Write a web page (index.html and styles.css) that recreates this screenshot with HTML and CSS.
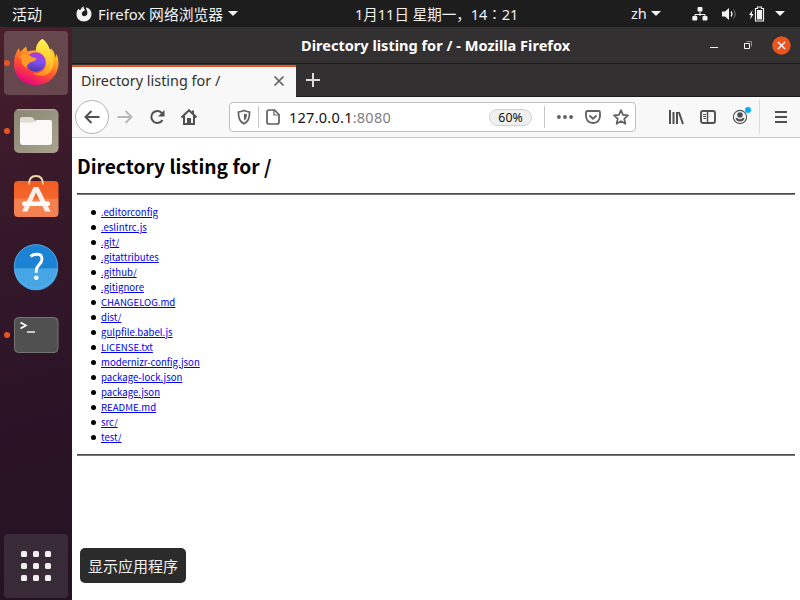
FILE: index.html
```html
<!DOCTYPE html>
<html lang="zh-CN">
<head>
<meta charset="utf-8">
<title>Directory listing for /</title>
<link rel="stylesheet" href="styles.css">
</head>
<body>
<div class="desktop">
  <header class="topbar">
    <span class="activities">活动</span>
    <div class="appmenu">
      <svg width="16" height="16" viewBox="0 0 16 16"><path fill="#f2f2f2" d="M8 .2C7.400 1.100 7.500 2 8.200 2.900L9.500 4L7.500 5L6 6.500C5.200 8.500 6.500 10.200 8.300 10.200C10.500 10.200 11.800 8.300 11.300 6C11 4.500 10.300 3.200 9.800 1.500C13.700 2 15.800 5 15.500 8.500C15.200 12.500 12 15.500 8 15.500C3.700 15.500.5 12.500.5 8.300C.5 5.900 1 4.300 2.500 2.800L3.400 4.100L4.900 3.500C5.200 2 6.300.8 8 .2Z"/></svg>
      <span class="appname">Firefox 网络浏览器</span><i class="caret"></i>
    </div>
    <span class="clock">1月11日 星期一，14∶21</span>
    <div class="status">
      <span class="lang">zh</span><i class="caret"></i>
      <svg class="net" width="16" height="14" viewBox="0 0 16 14"><path d="M8 3v6M3 10V7.500h10V10" fill="none" stroke="#f2f2f2"/><g fill="#f2f2f2"><rect x="5.500" width="5" height="4.500" rx="1"/><rect x=".3" y="9" width="5" height="4.500" rx="1"/><rect x="10.500" y="9" width="5" height="4.500" rx="1"/></g></svg>
      <svg class="vol" width="15" height="14" viewBox="0 0 15 14"><path d="M0 4.500h3L7 1v12L3 9.500H0z" fill="#f2f2f2"/><path d="M9 4.500q2 2.500 0 5" fill="none" stroke="#f2f2f2" stroke-width="1.300"/><path d="M11.500 2.500q3.500 4.500 0 9" fill="none" stroke="#777"/></svg>
      <svg class="bat" width="16" height="16" viewBox="0 0 16 16"><path d="M3.500 4L0 9h2l-.8 4.500L4.600 8H2.800z" fill="#f2f2f2"/><path d="M6.500 2.500h2v-1.500h4v1.500h2v12.500h-8z" fill="none" stroke="#f2f2f2" stroke-width="1.200"/><path d="M8 4h5v9.500H8z" fill="#f2f2f2"/></svg>
      <i class="caret"></i>
    </div>
  </header>
  <div class="main">
    <nav class="dock">
      <div class="tile active running">
        <svg width="48" height="48" viewBox="0 0 48 48">
          <defs>
            <linearGradient id="fox" x1=".8" y1="0" x2=".35" y2="1"><stop offset="0" stop-color="#fff24a"/><stop offset=".35" stop-color="#ffab20"/><stop offset=".65" stop-color="#ff542e"/><stop offset="1" stop-color="#e9007f"/></linearGradient>
            <linearGradient id="globe" x1=".6" y1="0" x2=".4" y2="1"><stop offset="0" stop-color="#b833e1"/><stop offset=".45" stop-color="#8350f5"/><stop offset="1" stop-color="#4b35a8"/></linearGradient>
            <linearGradient id="flame" x1=".4" y1="0" x2=".3" y2="1"><stop offset="0" stop-color="#fff44f"/><stop offset=".6" stop-color="#ffc42e"/><stop offset="1" stop-color="#ff8a25"/></linearGradient>
          </defs>
          <path fill="url(#fox)" d="M30.500 0C35 3 37 8 38 11L39 9.500C42 12 43 16 43.500 19L44.500 15C46.500 19 47 24 46 29C43.500 40 34 46 24 46C11 46 2 37 2 25C2 18 4 13 7 9L8 13L14 7.500L15.500 12.500C20 11 23 12 24 11C24 6 27 2 30.500 0Z"/>
          <path fill="url(#flame)" d="M30.500 0C35 4 37 8 38 12C43.500 19 43 30 36 35C31 38 25 37 21 34C29 35 34.500 31 34.500 24C34.500 19 31 14 24 12C24 6 27 2 30.500 0Z"/>
          <circle cx="23.800" cy="23" r="9.800" fill="url(#globe)"/>
          <path fill="#ff9a27" d="M7 18Q13 12 19 17.500L24.500 19.500Q24 22 19 23Q15 25 14.500 29Q9 26 9.500 20Z"/>
        </svg>
      </div>
      <div class="tile running">
        <svg width="48" height="48" viewBox="0 0 48 48"><defs><linearGradient id="cab" x1="0" y1="0" x2="1" y2="1"><stop offset="0" stop-color="#898474"/><stop offset="1" stop-color="#aaa48f"/></linearGradient></defs><rect x="2" y="2" width="44.500" height="44" rx="5" fill="url(#cab)"/><path d="M5 2.700h38" stroke="#bbb6a5"/><path d="M8 15v-3q0-2 2-2h9q1.500 0 2.500 1.500L23.500 14v3H8z" fill="#dedbd0"/><path d="M8 15.500h12q2 0 3.500-1.500l1-1H38q2 0 2 2v20q0 3-3 3H11q-3 0-3-3z" fill="#faf9f8"/></svg>
      </div>
      <div class="tile">
        <svg width="48" height="48" viewBox="0 0 48 48"><defs><linearGradient id="bag" x1="0" y1="0" x2="0" y2="1"><stop offset="0" stop-color="#f15b22"/><stop offset=".48" stop-color="#f4662e"/><stop offset=".5" stop-color="#f6804e"/><stop offset="1" stop-color="#f38153"/></linearGradient></defs><rect x="2" y="6" width="44.500" height="36" rx="4" fill="url(#bag)"/><path d="M17 9.500Q17 1 24 1T31 9.500" fill="none" stroke="#f2d6a6" stroke-width="1.800"/><path d="M21.500 12h5L38.500 36.500H33L24 17.500L15.500 36.500H10z" fill="#f9eee8"/><rect x="10" y="26.500" width="28" height="4.500" rx="2.250" fill="#fff"/></svg>
      </div>
      <div class="tile">
        <svg width="48" height="48" viewBox="0 .7 48 48"><circle cx="24" cy="24" r="22" fill="#1c83d4"/><path d="M2 26h44A22 22 0 0 1 2 26" fill="#46a5e5"/><circle cx="24" cy="24" r="21.700" fill="none" stroke="#62b2e9" stroke-width=".7"/><path d="M18.500 14Q21 12 25 12Q30 12 30 16.800Q30 19.800 27 22.500Q24.300 25 24.300 28V30.500" fill="none" stroke="#fff" stroke-width="2.900"/><circle cx="24.300" cy="35.500" r="2.300" fill="#fff"/></svg>
      </div>
      <div class="tile running">
        <svg width="48" height="48" viewBox="0 0 48 48"><rect x="2.500" y="6.500" width="43.500" height="35" rx="4" fill="#505050" stroke="#777572"/><path d="M8.500 11.500l5.500 3l-5.500 3" fill="none" stroke="#fff" stroke-width="1.600"/><path d="M15 21h8" stroke="#fff" stroke-width="1.400"/></svg>
      </div>
      <div class="tile apps"><div class="dots"><i></i><i></i><i></i><i></i><i></i><i></i><i></i><i></i><i></i></div></div>
    </nav>
    <section class="window">
      <div class="titlebar">
        <span class="title">Directory listing for / - Mozilla Firefox</span>
        <div class="controls">
          <svg width="10" height="10" viewBox="0 0 10 10"><path d="M1 7.500h8" stroke="#fff"/></svg>
          <svg width="10" height="10" viewBox="0 0 10 10"><path d="M3.500 1.500h5v5" fill="none" stroke="#aaa" stroke-width=".8"/><path d="M1.500 3.500h5v5h-5z" fill="none" stroke="#fff"/></svg>
          <svg class="close" width="19" height="19" viewBox="0 0 19 19"><circle cx="9.500" cy="9.500" r="9.200" fill="#e95420"/><path d="M6 6l7 7M13 6l-7 7" stroke="#fff" stroke-width="1.300"/></svg>
        </div>
      </div>
      <div class="tabs">
        <div class="tab"><span class="tabtitle">Directory listing for /</span><svg width="12" height="12" viewBox="0 0 12 12"><path d="M1.500 1.500l9 9M10.500 1.500l-9 9" stroke="#606060" stroke-width="1.700"/></svg></div>
        <svg class="newtab" width="16" height="16" viewBox="0 0 16 16"><path d="M1 8h14M8 1v14" stroke="#dcdcdc" stroke-width="2"/></svg>
      </div>
      <div class="toolbar">
        <div class="back"><svg width="16" height="16" viewBox="0 0 16 16"><path d="M15.500 8H1.500M7.500 2l-6 6l6 6" fill="none" stroke="#505050" stroke-width="2"/></svg></div>
        <div class="btn"><svg width="16" height="16" viewBox="0 0 16 16"><path d="M.5 8h14M8.500 2l6 6l-6 6" fill="none" stroke="#b8b8b8" stroke-width="2"/></svg></div>
        <div class="btn"><svg width="16" height="16" viewBox="0 0 16 16"><path d="M13.500 11A6 6 0 1 1 13 4.200" fill="none" stroke="#505050" stroke-width="2"/><path d="M15.500 1v6.500H9z" fill="#505050"/></svg></div>
        <div class="btn"><svg width="16" height="16" viewBox="0 0 16 16"><path d="M.5 8.500L8 1.300l7.500 7.200M3 7v8h10V7" fill="none" stroke="#505050" stroke-width="2"/><path d="M6 15V9h4v6zM11 1.500h2v4l-2-2z" fill="#505050"/></svg></div>
        <div class="urlbar">
          <div class="ub"><svg width="16" height="16" viewBox="0 0 16 16"><path d="M8 1.500Q11 2.800 13.500 3Q14 12 8 14.700Q2 12 2.500 3Q5 2.800 8 1.500z" fill="none" stroke="#606060" stroke-width="1.700"/><path d="M8 4.500Q9.500 5.200 11 5.200Q11 10 8 11.800z" fill="#606060"/></svg></div>
          <i class="sep"></i>
          <div class="ub"><svg width="16" height="16" viewBox="0 0 16 16"><path d="M4 1h5.500L14 5.500V13q0 2-2 2H4q-2 0-2-2V3q0-2 2-2z" fill="none" stroke="#606060" stroke-width="1.700"/><path d="M9 1v5h5" fill="none" stroke="#606060" stroke-width="1.200"/></svg></div>
          <span class="url"><b>127.0.0.1</b>:8080</span>
          <span class="zoom">60%</span>
          <i class="sep sep2"></i>
          <div class="ub"><svg width="16" height="16" viewBox="0 0 16 16"><g fill="#606060"><circle cx="1.900" cy="8" r="1.900"/><circle cx="8" cy="8" r="1.900"/><circle cx="14.100" cy="8" r="1.900"/></g></svg></div>
          <div class="ub"><svg width="16" height="16" viewBox="0 0 16 16"><path d="M2.500 2h11q1.500 0 1.500 1.500V7Q14.500 14 8 14T1 7V3.500Q1 2 2.500 2z" fill="none" stroke="#606060" stroke-width="1.800"/><path d="M4.500 6.500L8 9.700l3.500-3.200" fill="none" stroke="#606060" stroke-width="1.800"/></svg></div>
          <div class="ub"><svg width="16" height="16" viewBox="0 0 16 16"><path d="M8 1.200l2 4.700l5 .5l-3.800 3.400l1.200 5L8 12.100l-4.400 2.700l1.200-5L1 6.400l5-.5z" fill="none" stroke="#606060" stroke-width="1.700" stroke-linejoin="round"/></svg></div>
        </div>
        <div class="btn library"><svg width="16" height="16" viewBox="0 0 16 16"><path d="M2 1v14M5.500 3v12M9 3v12M10.800 3l4.200 12" fill="none" stroke="#505050" stroke-width="2"/></svg></div>
        <div class="btn"><svg width="16" height="16" viewBox="0 0 16 16"><rect x="1" y="2" width="14" height="12" rx="2" fill="none" stroke="#505050" stroke-width="1.900"/><path d="M7.500 2v12" stroke="#505050" stroke-width="1.500"/><path d="M3 5.500h3M3 7.500h3M3.500 9.500H6" stroke="#505050"/></svg></div>
        <div class="btn account"><svg width="16" height="16" viewBox="0 0 16 16"><circle cx="8" cy="8" r="6.600" fill="none" stroke="#505050" stroke-width="1.100"/><circle cx="8" cy="6" r="2.800" fill="#505050"/><path d="M3.500 9q1.500-.5 2.500.5q2 1.300 4 0Q11.200 8.500 12.500 9q-.8 3.500-4.500 3.500T3.500 9z" fill="#505050"/></svg><i class="badge"></i></div>
        <i class="divider"></i>
        <div class="btn menu"><svg width="16" height="16" viewBox="0 0 16 16"><path d="M2 3h12M2 8h12M2 13h12" stroke="#505050" stroke-width="1.800"/></svg></div>
      </div>
      <main class="page">
        <h1>Directory listing for /</h1>
        <hr>
        <ul>
          <li><a>.editorconfig</a></li>
          <li><a>.eslintrc.js</a></li>
          <li><a>.git/</a></li>
          <li><a>.gitattributes</a></li>
          <li><a>.github/</a></li>
          <li><a>.gitignore</a></li>
          <li><a>CHANGELOG.md</a></li>
          <li><a>dist/</a></li>
          <li><a>gulpfile.babel.js</a></li>
          <li><a>LICENSE.txt</a></li>
          <li><a>modernizr-config.json</a></li>
          <li><a>package-lock.json</a></li>
          <li><a>package.json</a></li>
          <li><a>README.md</a></li>
          <li><a>src/</a></li>
          <li><a>test/</a></li>
        </ul>
        <hr>
      </main>
    </section>
  </div>
  <div class="tooltip">显示应用程序</div>
</div>
</body>
</html>
```
FILE: styles.css
```css
* { box-sizing: border-box; }
body { margin: 0; font-family: "Noto Sans", "Noto Sans CJK SC", sans-serif; white-space: nowrap; }
svg { display: block; flex: none; }
i { display: block; flex: none; }
.desktop { position: relative; width: 800px; height: 600px; overflow: hidden; display: flex; flex-direction: column; }
.topbar { height: 27px; flex: none; display: flex; align-items: center; background: #1d1d1d; color: #f2f2f2; font-size: 14.5px; line-height: 27px; padding: 0 14px 0 12px; }
.activities { width: 64px; padding-top: 2px; font-size: 15px; }
.appmenu { display: flex; align-items: center; width: 279px; }
.appname { width: 125px; margin: 2px 5px 0 6px; font-size: 14.8px; }
.caret { border: 5px solid transparent; border-top-color: #f2f2f2; border-bottom: 0; }
.clock { width: 276px; padding-top: 2px; }
.status { display: flex; align-items: center; }
.lang { width: 15px; margin-right: 5px; }
.net { margin-left: 31px; }
.vol { margin-left: 14px; }
.bat { margin: 0 10px 0 12px; }
.main { flex: 1; display: flex; min-height: 0; }
.dock { width: 72px; flex: none; padding: 4px 4px 2px; display: flex; flex-direction: column; gap: 4px; background: linear-gradient(165deg, #491f2a 0, #3e1b2b 18%, #341829 36%, #2c1427 62%, #231222 100%); }
.tile { position: relative; height: 64px; flex: none; border-radius: 4px; display: flex; align-items: center; justify-content: center; }
.active { background: #66474e; }
.running::before { content: ""; position: absolute; left: 0; top: 29px; width: 6px; height: 6px; border-radius: 50%; background: #e95420; }
.apps { margin-top: auto; background: #382a36; }
.dots { display: grid; grid-template-columns: repeat(3, 6px); gap: 6px; }
.dots i { height: 6px; border-radius: 1.5px; background: #f0efec; }
.window { flex: 1; min-width: 0; display: flex; flex-direction: column; background: #fff; }
.titlebar { height: 37px; flex: none; display: flex; align-items: center; background: #323031; border-bottom: 1px solid #1c1b1c; color: #fff; padding-left: 229px; }
.title { font-size: 14.55px; font-weight: 700; width: 408px; }
.controls { display: flex; align-items: center; gap: 24px; }
.close { margin-left: -5px; }
.tabs { height: 33px; flex: none; display: flex; align-items: center; background: #323031; border-bottom: 1px solid #1c1b1c; }
.tab { width: 224px; height: 32px; margin-top: 1px; display: flex; align-items: center; justify-content: space-between; background: #f8f8f8; border-top: 2px solid #e95420; padding: 0 11px 2px 9px; align-self: flex-start; color: #303030; font-size: 14.4px; }
.tabtitle { padding-bottom: 2px; }
.newtab { margin-left: 9px; }
.toolbar { height: 41px; flex: none; display: flex; align-items: center; background: #f8f8f8; border-bottom: 1px solid #c6c6c6; padding-left: 3px; }
.back { width: 34px; height: 34px; border: 1px solid #b5b5b5; border-radius: 50%; background: #fff; display: flex; align-items: center; justify-content: center; }
.btn { width: 32px; height: 32px; flex: none; display: flex; align-items: center; justify-content: center; }
.urlbar { width: 407px; height: 30px; flex: none; margin: 0 24px; display: flex; align-items: center; background: #fff; border: 1px solid #c0c0c0; border-radius: 4px; }
.ub { width: 28px; flex: none; display: flex; justify-content: center; }
.sep { width: 1px; height: 22px; background: #c6c6c6; }
.url { flex: 1; padding-left: 2px; font-size: 14.5px; letter-spacing: .25px; color: #808080; }
.url b { font-weight: 400; color: #111; }
.zoom { width: 43px; height: 17px; border: 1px solid #d0d0d0; border-radius: 9px; background: #f0f0f0; color: #111; font-size: 12.3px; line-height: 15px; text-align: center; }
.sep2 { margin: 0 6px 0 12px; }
.account { position: relative; }
.badge { position: absolute; left: 21px; top: 6px; width: 6px; height: 6px; border-radius: 50%; background: #00aff5; }
.divider { width: 1px; height: 34px; background: #dcdcdc; margin: 0 5px 0 3px; }
.page { flex: 1; padding: 0 5px; color: #000; font-family: "Noto Sans CJK SC", sans-serif; }
h1 { margin: 13px 0 11px; font-size: 19.2px; line-height: 31px; font-weight: 700; }
hr { margin: 0; border: 0; height: 2px; background: #777; border-top: 1px solid #4e4e4e; }
ul { margin: 10px 0 9px; padding-left: 24px; list-style: none; }
li { position: relative; height: 15px; line-height: 15px; font-size: 9.6px; }
li::before { content: ""; position: absolute; left: -10px; top: 5px; width: 5px; height: 5px; border-radius: 50%; background: #000; }
a { color: #0000ee; text-decoration: underline; }
.tooltip { position: absolute; left: 80px; top: 548px; width: 106px; height: 35px; border-radius: 5px; background: #2b2b2b; color: #f2f2f2; font-size: 15px; line-height: 36px; padding-left: 8px; font-family: "Noto Sans CJK SC", sans-serif; }
```
